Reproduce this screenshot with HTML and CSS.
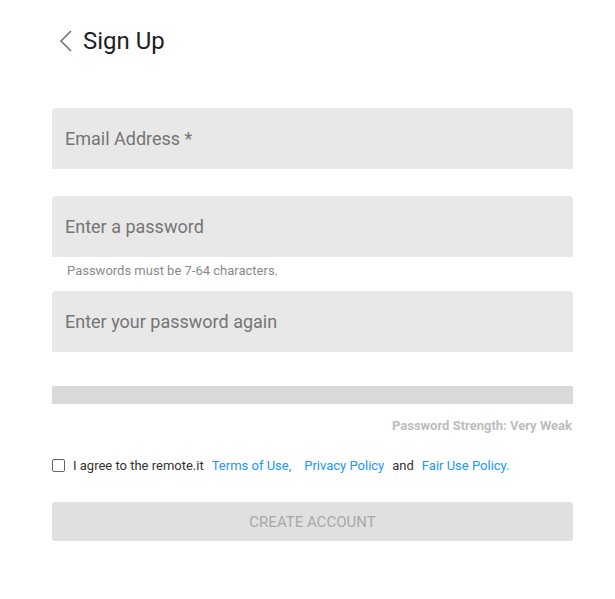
FILE: index.html
```html
<!DOCTYPE html>
<html>
    <head>
        <meta charset="utf-8">
        <title>Sign Up</title>
        <link rel="stylesheet" href="styles.css">
    </head>
    <body>
        <div id="page">
            <div class="header">
                <svg class="back" width="14" height="24" viewBox="0 0 14 24">
                    <path d="M12 2 L2 12 L12 22" fill="none" stroke="#757575" stroke-width="1.6"/>
                </svg>
                <span class="title">Sign Up</span>
            </div>

            <div class="form">
                <div class="field">Email Address *</div>
                <div class="field pw">Enter a password</div>
                <div class="helper">Passwords must be 7-64 characters.</div>
                <div class="field">Enter your password again</div>

                <div class="strength-bar"></div>
                <div class="strength-text">Password Strength: Very Weak</div>

                <div class="agree">
                    <span class="check"></span>
                    <span class="txt">I agree to the remote.it</span>
                    <a class="link" href="#">Terms of Use,</a>
                    <a class="link policy" href="#">Privacy Policy</a>
                    <span class="txt">and</span>
                    <a class="link" href="#">Fair Use Policy.</a>
                </div>

                <button class="create">CREATE ACCOUNT</button>
            </div>
        </div>
    </body>
</html>
```

FILE: styles.css
```css
body {
    margin: 0;
    background: #fff;
    font-family: Roboto, "Liberation Sans", sans-serif;
}
#page {
    padding: 25px 42px 0 52px;
}
.header {
    display: flex;
    align-items: center;
    height: 32px;
    padding-left: 7px;
}
.back {
    display: block;
    margin-right: 10px;
}
.title {
    font-size: 24px;
    color: #212121;
}
.form {
    margin-top: 51px;
    display: flex;
    flex-direction: column;
}
.field {
    height: 61px;
    background: #e8e8e8;
    border-radius: 4px 4px 0 0;
    padding-left: 13px;
    display: flex;
    align-items: center;
    font-size: 18px;
    color: #757575;
    box-sizing: border-box;
}
.field.pw {
    margin-top: 27px;
}
.helper {
    font-size: 13px;
    color: #8a8a8a;
    padding: 6px 0 0 15px;
    height: 34px;
    box-sizing: border-box;
}
.strength-bar {
    margin-top: 34px;
    height: 18px;
    background: #d9d9d9;
}
.strength-text {
    text-align: right;
    font-size: 13px;
    font-weight: bold;
    color: #bdbdbd;
    margin-top: 14px;
    padding-right: 1px;
}
.agree {
    display: flex;
    align-items: center;
    margin-top: 23px;
    font-size: 13px;
    color: #333;
    height: 18px;
}
.check {
    width: 11px;
    height: 11px;
    border: 1px solid #666;
    border-radius: 2px;
    margin-right: 8px;
}
.txt {
    margin-right: 8px;
}
.link {
    color: #2196f3;
    text-decoration: none;
    margin-right: 13px;
}
.link.policy {
    margin-right: 8px;
}
.create {
    margin-top: 28px;
    height: 39px;
    border: none;
    border-radius: 3px;
    background: #e0e0e0;
    color: #a8a8a8;
    font-family: Roboto, "Liberation Sans", sans-serif;
    font-size: 15px;
    padding: 0;
}
```
